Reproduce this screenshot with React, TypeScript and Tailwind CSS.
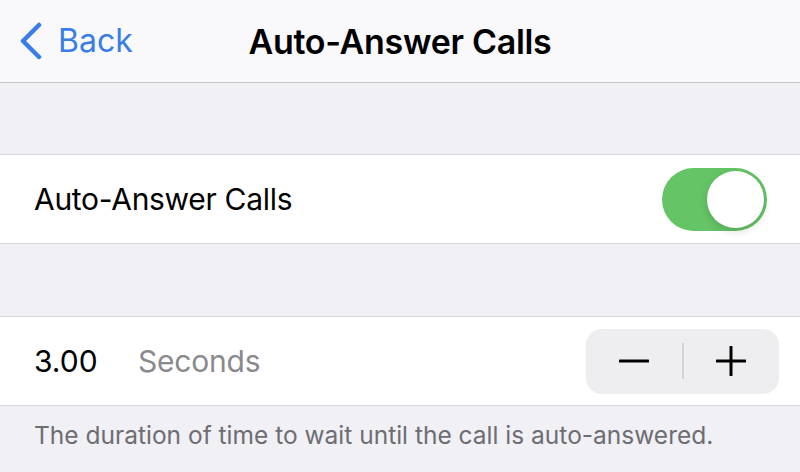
const Toggle = () => {
  return (
    <div className="w-[105px] h-[63px] rounded-full bg-[#65c466] flex items-center justify-end p-[3px]">
      <div className="w-[57px] h-[57px] rounded-full bg-white shadow-[0_3px_8px_rgba(0,0,0,0.15)]" />
    </div>
  )
}

const Stepper = () => {
  return (
    <div className="w-[193px] h-[65px] rounded-[16px] bg-[#eeeef0] flex items-center">
      <button className="flex-1 h-full flex items-center justify-center">
        <svg width="30" height="30" viewBox="0 0 30 30">
          <path d="M1 15H29" stroke="#000" strokeWidth="3" strokeLinecap="round" />
        </svg>
      </button>
      <div className="w-[2px] h-[36px] bg-[#d4d4d8]" />
      <button className="flex-1 h-full flex items-center justify-center">
        <svg width="30" height="30" viewBox="0 0 30 30">
          <path d="M1 15H29M15 1V29" stroke="#000" strokeWidth="3" strokeLinecap="round" />
        </svg>
      </button>
    </div>
  )
}

const App = () => {
  return (
    <div className="w-[800px] h-[472px] bg-[#f0f0f5] overflow-hidden font-['Inter',sans-serif]">
      <div className="h-[83px] bg-[#f9f9fb] border-b border-[#c6c6c8] relative flex items-center">
        <div className="flex items-center pl-[18px] text-[#3b7de6]">
          <svg width="26" height="38" viewBox="0 0 26 38">
            <path d="M21 3L5 19L21 35" fill="none" stroke="currentColor" strokeWidth="4.5" strokeLinecap="round" strokeLinejoin="round" />
          </svg>
          <span className="ml-[14px] text-[32px] tracking-[0px]">Back</span>
        </div>
        <h1 className="absolute left-0 right-0 text-center text-[34px] font-semibold text-black tracking-[-0.3px] pointer-events-none">
          Auto-Answer Calls
        </h1>
      </div>

      <div className="h-[71px]" />

      <div className="h-[90px] bg-white border-y border-[#d8d8dc] flex items-center justify-between pl-[34px] pr-[33px]">
        <span className="text-[30px] text-black tracking-[-0.3px]">Auto-Answer Calls</span>
        <Toggle />
      </div>

      <div className="h-[72px]" />

      <div className="h-[90px] bg-white border-y border-[#d8d8dc] flex items-center pl-[34px] pr-[21px]">
        <span className="text-[30px] text-black w-[104px]">3.00</span>
        <span className="text-[30px] text-[#8a8a8e] tracking-[-0.2px]">Seconds</span>
        <div className="ml-auto">
          <Stepper />
        </div>
      </div>

      <p className="pl-[34px] pt-[11px] text-[24.5px] text-[#6d6d72] tracking-[0px]">
        The duration of time to wait until the call is auto-answered.
      </p>
    </div>
  )
}

export default App
